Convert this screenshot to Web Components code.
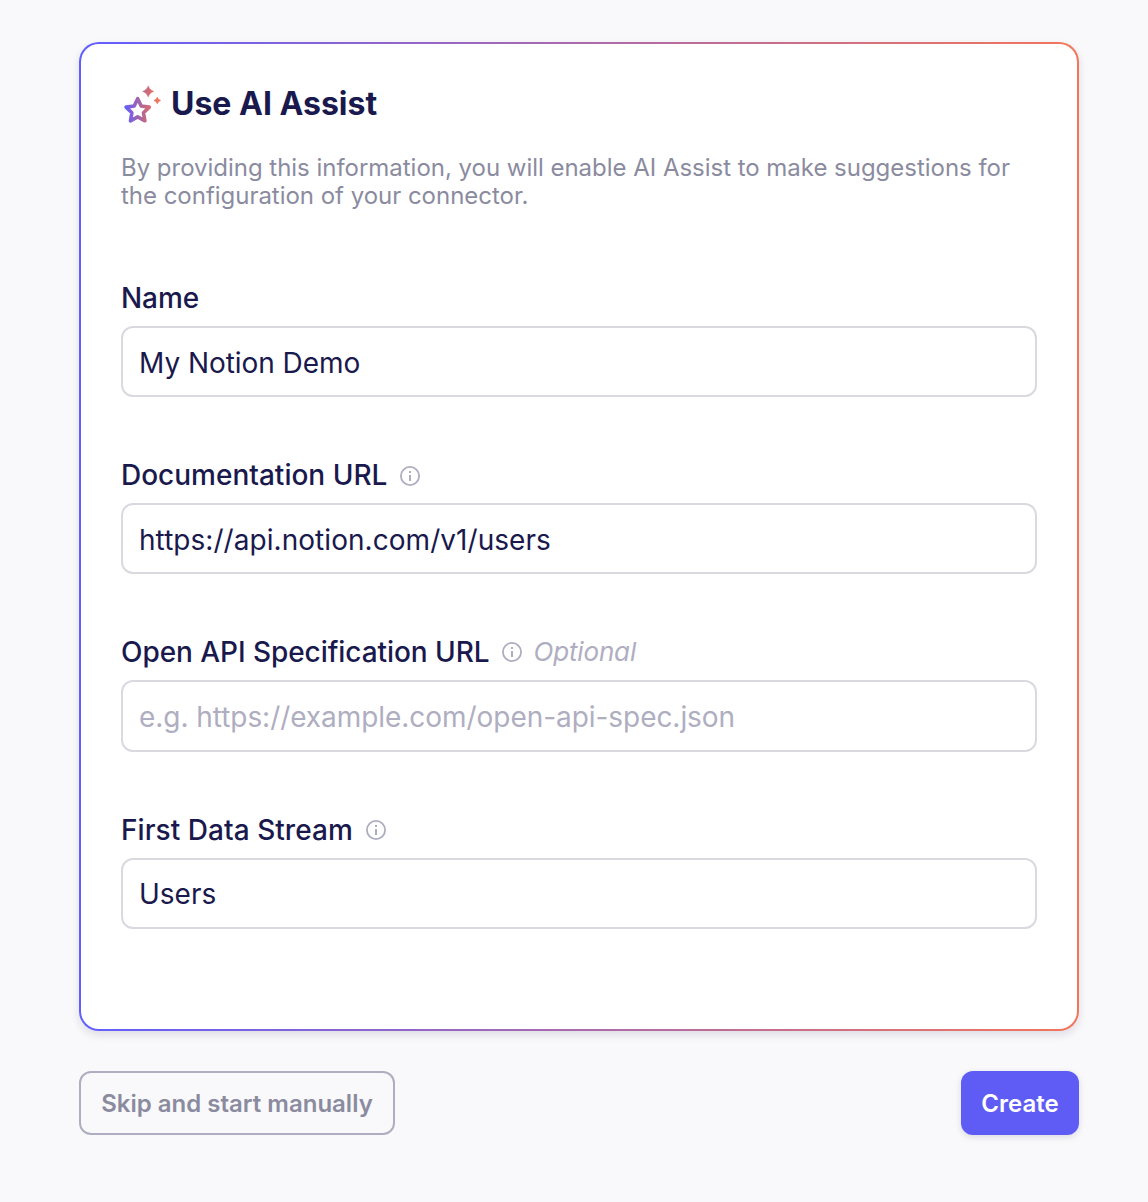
<!DOCTYPE html>
<html lang="en">
<head>
<meta charset="utf-8">
<title>Use AI Assist</title>
<style>
  html, body { margin: 0; height: 100%; background: #f9f9fb; }
  body { font-family: Inter, "Liberation Sans", sans-serif; color: #1a194d; overflow: hidden; }
</style>
</head>
<body>
<assist-page>
  <assist-card>
    <assist-heading slot="heading">Use AI Assist</assist-heading>
    <span slot="description">By providing this information, you will enable AI Assist to make suggestions for<br>the configuration of your connector.</span>
    <form-field label="Name" style="--label-spacing:-.1px;--value-spacing:-.05px">My Notion Demo</form-field>
    <form-field label="Documentation URL" info style="--value-spacing:.05px;--icon-gap:13px;--icon-shift:1px">https://api.notion.com/v1/users</form-field>
    <form-field label="Open API Specification URL" info optional placeholder style="--label-spacing:-.06px;--icon-gap:12px;--value-spacing:-.05px;--value-height:72px;--value-shift:2px">e.g. https://example.com/open-api-spec.json</form-field>
    <form-field label="First Data Stream" info style="--label-spacing:.05px;--icon-gap:13px;--value-shift:1px">Users</form-field>
  </assist-card>
  <action-button slot="actions" variant="secondary">Skip and start manually</action-button>
  <action-button slot="actions" variant="primary">Create</action-button>
</assist-page>
<script>
class BaseElement extends HTMLElement {
  render(html) {
    this.attachShadow({ mode: 'open' }).innerHTML = html;
  }
}

customElements.define('assist-page', class extends BaseElement {
  connectedCallback() {
    this.render(`<style>
      :host { display: flex; flex-direction: column; box-sizing: border-box; padding: 42px 69px 0 79px; gap: 40px; }
      .actions { display: flex; justify-content: space-between; }
    </style>
    <slot></slot>
    <div class="actions"><slot name="actions"></slot></div>`);
  }
});

customElements.define('assist-card', class extends BaseElement {
  connectedCallback() {
    this.render(`<style>
      :host { display: block; box-sizing: border-box; height: 989px; padding: 40px; border: 2px solid transparent; border-radius: 20px;
        background: linear-gradient(#fff, #fff) padding-box, linear-gradient(90deg, #615eff, #f4755a) border-box;
        box-shadow: 0 4px 8px rgba(26, 25, 77, .12); }
      .description { margin: 28px 0 0; font-size: 24px; line-height: 28px; letter-spacing: -.025px; color: #8b8ba0; white-space: nowrap; }
      .fields { display: flex; flex-direction: column; gap: 60px; margin-top: 70px; }
    </style>
    <slot name="heading"></slot>
    <p class="description"><slot name="description"></slot></p>
    <div class="fields"><slot></slot></div>`);
  }
});

customElements.define('assist-heading', class extends BaseElement {
  connectedCallback() {
    this.render(`<style>
      :host { display: flex; align-items: center; height: 42px; gap: 10px; }
      svg { display: block; flex: none; }
      h1 { margin: 0 0 2px; font-size: 32px; line-height: 40px; font-weight: 700; white-space: nowrap; }
    </style>
    <svg width="40" height="42" viewBox="0 0 40 42" aria-hidden="true">
      <defs><linearGradient id="g" gradientUnits="userSpaceOnUse" x1="4" y1="0" x2="38" y2="0">
        <stop stop-color="#615eff"/><stop offset=".66" stop-color="#cc6a78"/><stop offset="1" stop-color="#f4755a"/></linearGradient></defs>
      <path d="M16.7 14.7L20.2 22L28.3 23.1L22.5 28.7L23.9 36.8L16.7 32.9L9.5 36.8L10.9 28.7L5.1 23.1L13.2 22Z" fill="none" stroke="url(#g)" stroke-width="3.6" stroke-linejoin="round"/>
      <path d="M27.2 1.8Q28.5 6.1 32.8 7.4Q28.5 8.7 27.2 13Q25.9 8.7 21.6 7.4Q25.9 6.1 27.2 1.8Z M36.3 13Q37.1 15.7 39.8 16.5Q37.1 17.3 36.3 20Q35.5 17.3 32.8 16.5Q35.5 15.7 36.3 13Z" fill="url(#g)" stroke="url(#g)" stroke-width=".4"/>
    </svg>
    <h1><slot></slot></h1>`);
  }
});

customElements.define('info-icon', class extends BaseElement {
  connectedCallback() {
    this.render(`<style>:host { display: block; width: 20px; height: 20px; } svg { display: block; }</style>
    <svg width="20" height="20" viewBox="0 0 20 20" aria-hidden="true">
      <circle cx="10" cy="10" r="9.1" fill="none" stroke="#afaec1" stroke-width="1.8"/>
      <path d="M9 5H11V7H9ZM9 9H11V15H9Z" fill="#afaec1"/>
    </svg>`);
  }
});

customElements.define('form-field', class extends BaseElement {
  connectedCallback() {
    const info = this.hasAttribute('info') ? '<info-icon></info-icon>' : '';
    const optional = this.hasAttribute('optional') ? '<em>Optional</em>' : '';
    this.render(`<style>
      :host { display: block; white-space: nowrap; }
      .label { display: flex; align-items: center; height: 36px; margin-bottom: 10px; font-size: 28px; font-weight: 500; line-height: 36px; letter-spacing: var(--label-spacing, 0); }
      info-icon { margin-left: var(--icon-gap, 14px); margin-top: calc(2 * var(--icon-shift, 0px)); }
      em { margin-left: 12px; font-size: 26px; font-weight: 400; color: #afaec1; letter-spacing: -.18px; }
      .value { box-sizing: border-box; height: var(--value-height, 71px); padding: var(--value-shift, 3px) 16px 0; display: flex; align-items: center; border: 2px solid #d9d9e0; border-radius: 12px; background: #fff; font-size: 28px; letter-spacing: var(--value-spacing, 0); }
      :host([placeholder]) .value { color: #afaec1; }
    </style>
    <div class="label"><span>${this.getAttribute('label')}</span>${info}${optional}</div>
    <div class="value" role="textbox"><slot></slot></div>`);
  }
});

customElements.define('action-button', class extends BaseElement {
  connectedCallback() {
    this.render(`<style>
      :host { display: block; }
      button { display: flex; align-items: center; justify-content: center; box-sizing: border-box; width: 118px; height: 64px; padding: 2px 0 0; border: 0; border-radius: 12px; background: #5f5cf6; color: #fff; font: 600 24px/28px Inter, "Liberation Sans", sans-serif; white-space: nowrap; box-shadow: 0 2px 6px rgba(26, 25, 77, .14); }
      :host([variant=secondary]) button { width: 316px; border: 2px solid #afaec1; background: transparent; color: #8b8ba0; box-shadow: none; }
    </style>
    <button type="button"><slot></slot></button>`);
  }
});
</script>
</body>
</html>
